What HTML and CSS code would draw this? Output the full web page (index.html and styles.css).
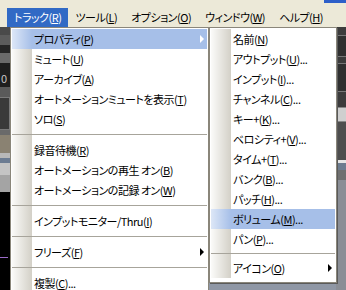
FILE: index.html
```html
<!DOCTYPE html>
<html lang="ja">
<head>
    <meta charset="UTF-8">
    <title>トラック メニュー</title>
    <link rel="stylesheet" href="styles.css">
</head>
<body>
    <div class="screen">
        <div class="menubar">
            <span class="bar-item active">トラック(<u>R</u>)</span>
            <span class="bar-item">ツール(<u>L</u>)</span>
            <span class="bar-item">オプション(<u>O</u>)</span>
            <span class="bar-item">ウィンドウ(<u>W</u>)</span>
            <span class="bar-item">ヘルプ(<u>H</u>)</span>
        </div>
        <div class="title-edge"></div>

        <div class="workspace">
            <div class="rail">
                <div class="s s1"></div>
                <div class="s s2"></div>
                <div class="s s3"></div>
                <div class="s s4"></div>
                <div class="s s5"><span class="digit">0</span></div>
                <div class="s s6"></div>
                <div class="s s7"></div>
                <div class="s s8"></div>
                <div class="s s9"></div>
                <div class="s s10"></div>
                <div class="s s11"></div>
                <div class="s s12"></div>
                <div class="s s13"></div>
                <div class="s s14"><div class="purple"></div></div>
            </div>
            <div class="middle"></div>
            <div class="rail">
                <div class="s r1"></div>
                <div class="s r2"></div>
                <div class="s r3"></div>
                <div class="s r4"></div>
                <div class="s r5"></div>
                <div class="s r6"></div>
                <div class="s r7"></div>
                <div class="s r8"></div>
                <div class="s r9"></div>
                <div class="s r10"></div>
                <div class="s r11"></div>
            </div>
        </div>

        <!-- トラック menu -->
        <div class="menu menu-track">
            <div class="item hot"><div class="gutter"></div><span class="label">プロパティ(<u>P</u>)</span><span class="arrow white"></span></div>
            <div class="item"><div class="gutter"></div><span class="label">ミュート(<u>U</u>)</span></div>
            <div class="item"><div class="gutter"></div><span class="label">アーカイブ(<u>A</u>)</span></div>
            <div class="item"><div class="gutter"></div><span class="label">オートメーションミュートを表示(<u>T</u>)</span></div>
            <div class="item"><div class="gutter"></div><span class="label">ソロ(<u>S</u>)</span></div>
            <div class="sep wide"></div>
            <div class="item"><div class="gutter"></div><span class="label">録音待機(<u>R</u>)</span></div>
            <div class="item"><div class="gutter"></div><span class="label">オートメーションの再生 オン(<u>B</u>)</span></div>
            <div class="item"><div class="gutter"></div><span class="label">オートメーションの記録 オン(<u>W</u>)</span></div>
            <div class="sep wide"></div>
            <div class="item"><div class="gutter"></div><span class="label">インプットモニター/Thru(<u>I</u>)</span></div>
            <div class="sep wide"></div>
            <div class="item"><div class="gutter"></div><span class="label">フリーズ(<u>F</u>)</span><span class="arrow"></span></div>
            <div class="sep wide"></div>
            <div class="item"><div class="gutter"></div><span class="label">複製(<u>C</u>)...</span></div>
        </div>

        <!-- プロパティ submenu -->
        <div class="menu menu-props">
            <div class="item"><div class="gutter"></div><span class="label">名前(<u>N</u>)</span></div>
            <div class="item"><div class="gutter"></div><span class="label">アウトプット(<u>U</u>)...</span></div>
            <div class="item"><div class="gutter"></div><span class="label">インプット(<u>I</u>)...</span></div>
            <div class="item"><div class="gutter"></div><span class="label">チャンネル(<u>C</u>)...</span></div>
            <div class="item"><div class="gutter"></div><span class="label">キー+(<u>K</u>)...</span></div>
            <div class="item"><div class="gutter"></div><span class="label">ベロシティ+(<u>V</u>)...</span></div>
            <div class="item"><div class="gutter"></div><span class="label">タイム+(<u>T</u>)...</span></div>
            <div class="item"><div class="gutter"></div><span class="label">バンク(<u>B</u>)...</span></div>
            <div class="item"><div class="gutter"></div><span class="label">パッチ(<u>H</u>)...</span></div>
            <div class="item hot"><div class="gutter"></div><span class="label">ボリューム(<u>M</u>)...</span></div>
            <div class="item"><div class="gutter"></div><span class="label">パン(<u>P</u>)...</span></div>
            <div class="sep"></div>
            <div class="item"><div class="gutter"></div><span class="label">アイコン(<u>O</u>)</span><span class="arrow"></span></div>
        </div>
    </div>
</body>
</html>
```

FILE: styles.css
```css
* {
    margin: 0;
    padding: 0;
    box-sizing: border-box;
}

body {
    font-family: "Noto Sans CJK JP", "Noto Sans", sans-serif;
    font-size: 11px;
    letter-spacing: -0.5px;
    font-feature-settings: "palt";
    color: #000000;
    background-color: #3c3c3c;
    overflow: hidden;
}

.screen {
    position: relative;
    width: 346px;
    height: 290px;
    display: flex;
    flex-direction: column;
    overflow: hidden;
}

u {
    text-decoration-thickness: 1px;
    text-underline-offset: 1px;
}

/* Menu bar */
.menubar {
    height: 27px;
    display: flex;
    align-items: flex-end;
    padding: 0 0 0 7px;
    background-color: #ece9d8;
}

.bar-item {
    height: 19px;
    line-height: 19px;
    padding: 0 7px;
    white-space: nowrap;
}

.bar-item.active {
    background-color: #316ac5;
    color: #ffffff;
}

.title-edge {
    position: absolute;
    top: 0;
    right: 0;
    width: 22px;
    height: 3px;
    background-color: #2d5fc9;
}

/* Background application */
.workspace {
    flex: 1;
    display: flex;
}

.rail {
    width: 10px;
    display: flex;
    flex-direction: column;
}

.middle {
    flex: 1;
    background-color: #8f97a5;
}

.s { flex-shrink: 0; }

.s1 { height: 8px; background-color: #4a4a4a; }
.s2 { height: 10px; background-color: #5c5c5c; }
.s3 { height: 8px; background-color: #262626; }
.s4 { height: 10px; background-color: #6a6a6a; }
.s5 { height: 24px; background-color: #1e1e1e; overflow: hidden; }
.s6 { height: 10px; background-color: #5a5a5a; }
.s7 { height: 33px; background-color: #3a3a3a; border: 1px solid #7a7a7a; border-left: none; }
.s8 { height: 5px; background-color: #6a6a6a; }
.s9 { height: 18px; background-color: #8a8272; }
.s10 { height: 5px; background-color: #b8b8b8; }
.s11 { height: 5px; background-color: #6c7c92; }
.s12 { height: 12px; background-color: #c4c4c4; }
.s13 { height: 17px; background-color: #a4a4a4; }
.s14 { flex: 1; background-color: #000000; padding-top: 65px; }

.digit {
    display: block;
    padding: 10px 0 0 1px;
    font-size: 11px;
    line-height: 11px;
    color: #c8c8c8;
}

.purple {
    width: 8px;
    height: 1px;
    background-color: #9a6ac8;
}

.r1 { height: 8px; background-color: #3c3c3c; }
.r2 { height: 22px; background-color: #303030; border: 1px solid #777777; border-right: none; }
.r3 { height: 6px; background-color: #3c3c3c; }
.r4 { height: 29px; background-color: #303030; border: 1px solid #777777; border-right: none; }
.r5 { height: 15px; background-color: #3c3c3c; }
.r6 { height: 15px; background-color: #cfcfcf; border: 1px solid #888888; border-right: none; }
.r7 { height: 38px; background-color: #4e4e4e; }
.r8 { height: 3px; background-color: #e6e6e6; }
.r9 { height: 7px; background-color: #6c7c90; }
.r10 { height: 10px; background-color: #707070; }
.r11 { flex: 1; background-color: #8a8e96; }

/* Drop-down menus */
.menu {
    position: absolute;
    top: 27px;
    display: flex;
    flex-direction: column;
    padding: 1px;
    background-color: #ffffff;
    border: 1px solid #8a867a;
}

.menu-track {
    left: 10px;
    width: 199px;
    height: 280px;
    border-bottom: none;
}

.menu-props {
    left: 209px;
    width: 128px;
    height: 256px;
    box-shadow: 1px 1px 0 #5a5a5a;
}

.item {
    height: 20px;
    display: flex;
    align-items: center;
    flex-shrink: 0;
}

.gutter {
    width: 20px;
    height: 100%;
    background: linear-gradient(to right, #fbfbf9, #d3d0c7);
}

.label {
    flex: 1;
    padding-left: 2px;
    white-space: nowrap;
    line-height: 20px;
}

.item.hot {
    background-color: #a6bfe8;
}

.item.hot .gutter {
    background: linear-gradient(to right, #dde7f7, #a6bfe8);
}

.arrow {
    width: 0;
    height: 0;
    margin-right: 3px;
    border-top: 4px solid transparent;
    border-bottom: 4px solid transparent;
    border-left: 4px solid #000000;
}

.arrow.white {
    border-left-color: #ffffff;
}

.sep {
    height: 9px;
    display: flex;
    align-items: center;
    flex-shrink: 0;
    background: linear-gradient(to right, #fbfbf9, #d3d0c7 20px, transparent 20px);
}

.sep::after {
    content: "";
    flex: 1;
    height: 1px;
    background-color: #a7a49b;
}

.sep.wide {
    height: 11px;
}
```
